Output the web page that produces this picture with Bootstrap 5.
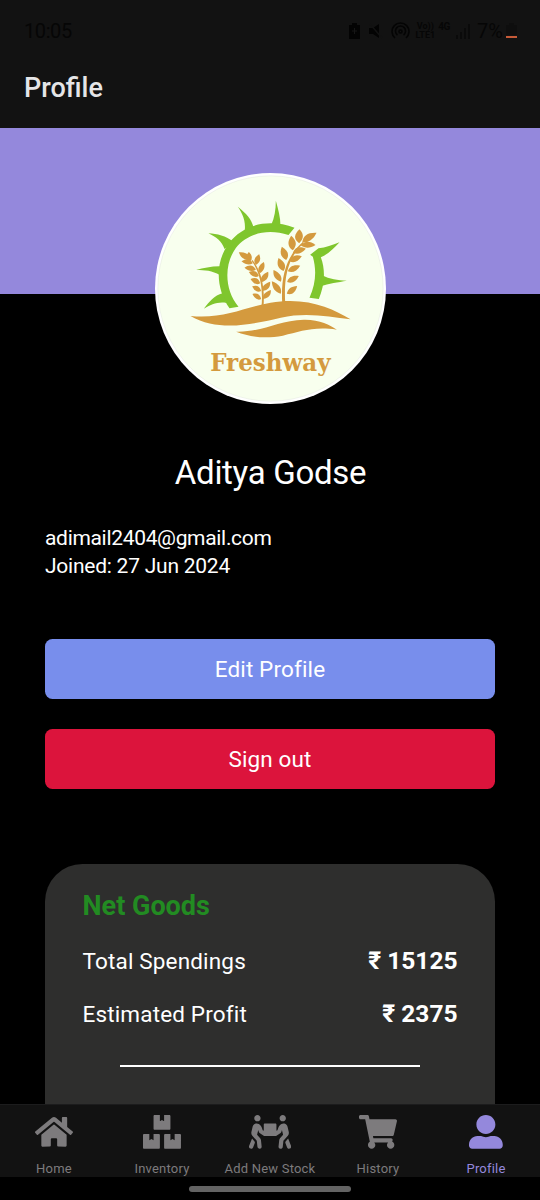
<!DOCTYPE html>
<html lang="en">
<head>
<meta charset="utf-8">
<meta name="viewport" content="width=device-width, initial-scale=1">
<title>Profile</title>
<link href="https://cdn.jsdelivr.net/npm/bootstrap@5.3.0/dist/css/bootstrap.min.css" rel="stylesheet">
<style>
body{background:#000;color:#fff;font-family:Roboto,"Liberation Sans",sans-serif;height:1200px;overflow:hidden}
.bar-bg{background:#121212}
.status{height:62px;color:#060606;font-size:20px;padding:0 23px 0 24px}
.clock{letter-spacing:-.4px}
.tiny-net{font-size:9px;line-height:9px;font-weight:700}
.net-type{font-size:10px;margin:0 0 10px 3px;letter-spacing:-.3px}
.title-row{height:66px;padding:0 24px 15px}
.title-row h1{font-size:27px;font-weight:500;color:#e5e5e7;line-height:32px}
.banner{height:166px;background:#9488dc}
.avatar{width:231px;height:231px;margin-top:-121px}
.person{font-size:33px;line-height:40px;margin-top:49px;font-weight:400;letter-spacing:-.3px;padding-left:1px}
.page-pad{padding:0 45px}
.details{font-size:21px;line-height:28px;margin-top:31px;letter-spacing:-.24px}
.details .mail{letter-spacing:-.32px}
.action{height:60px;font-size:22.5px;border:0;border-radius:7.5px;color:#fff;padding:2px 0 0}
.edit{background:#788eec;margin-top:58.5px;letter-spacing:.15px}
.signout{background:#dc143c;margin-top:30px;letter-spacing:.1px}
.goods{background:#2e2e2d;border-radius:37.5px 37.5px 0 0;margin-top:75px;padding:26px 37.5px 0;height:241.5px}
.goods h2{font-size:27px;line-height:32px;font-weight:700;color:#228b22}
.line-item{font-size:22.5px;line-height:28px;letter-spacing:.16px;margin-top:25px}
.line-item strong{font-size:24.5px;font-weight:700;letter-spacing:0}
.rule{height:1.5px;background:#fff;margin:37.5px 37.5px 0}
.tabs{height:73px;border-top:1px solid #1c1c1d}
.tab{font-size:13px;line-height:16px;color:#7d7b7d;letter-spacing:.2px;width:20%;padding-top:10px}
.tab svg{height:33.75px;display:block;margin-bottom:12.25px}
.tab.current{color:#9488dc}
.home-area{height:23px}
.handle{width:162px;height:6px;background:#636363}
</style>
</head>
<body class="d-flex flex-column">
<header class="bar-bg flex-shrink-0">
  <div class="status d-flex align-items-center justify-content-between">
    <span class="clock">10:05</span>
    <div class="d-flex align-items-center">
      <svg width="13" height="16" viewBox="0 0 13 16"><path fill="#030303" d="M4 0h5v2h3v14H1V2h3z"/><path d="M6.500 5v6M4 8h5" stroke="#161616"/></svg>
      <svg class="ms-2" width="14" height="16" viewBox="0 0 14 16"><path fill="#030303" d="M0 5h4l6-4v14l-6-4H0z"/><path d="M1 1l12 14" stroke="#121212" stroke-width="1.500"/></svg>
      <svg class="ms-2" width="19" height="18" viewBox="0 0 19 18" fill="none" stroke="#040404" stroke-width="1.600"><path d="M4 16a8.500 8.500 0 1 1 11 0M6.500 13a5 5 0 1 1 6 0"/><circle cx="9.500" cy="9.500" r="1.500"/></svg>
      <span class="tiny-net text-center" style="margin-left:5px">Vo))<br>LTE1</span>
      <span class="tiny-net net-type">4G</span>
      <svg style="margin-left:6px" width="15" height="15" viewBox="0 0 15 15"><path d="M1 15v-4M5 15V8M9 15V4M13 15V0" stroke="#080808" stroke-width="1.500"/></svg>
      <span style="margin-left:6px">7%</span>
      <svg style="margin:0 0 0 3px" width="11" height="16" viewBox="0 0 11 16"><path fill="#0e0e0e" d="M3 0h5v2h3v10H0V2h3z"/><path fill="#c65a38" d="M0 13h11v2H0z"/></svg>
    </div>
  </div>
  <div class="title-row d-flex align-items-center"><h1 class="m-0">Profile</h1></div>
</header>

<main class="flex-grow-1 overflow-hidden">
  <div class="banner"></div>
  <svg class="avatar d-block mx-auto position-relative" viewBox="13.5 24 693 693">
    <circle cx="360" cy="370.500" r="346.500" fill="#fff"/>
    <circle cx="360" cy="370.500" r="338" fill="#f8ffee" stroke="#d9dfd5" stroke-width="1"/>
    <!-- sun ring and rays -->
    <g fill="#7fc62d">
      <path d="M237 430C197 374 192 294 234 236C281 174 360 162 432 188L414 210C354 191 292 203 256 249C219 300 223 377 264 425Z"/>
      <path d="M283 196C286 168 276 145 262 125C287 145 304 163 309 187Z"/>
      <path d="M362 180C372 158 376 134 376 107C383 132 390 157 390 182Z"/>
      <path d="M222 252C214 229 197 216 174 205C200 207 226 212 249 231Z"/>
      <path d="M208 330C185 317 164 315 137 315C160 309 185 303 213 304Z"/>
      <path d="M160 431C175 412 192 391 216 385L228 414C203 409 181 419 160 431Z"/>
      <path d="M479 269L504 250C526 248 545 241 567 232C551 249 536 266 511 277C526 316 522 362 505 402L477 398C497 354 498 313 487 275Z"/>
      <path d="M514 330C538 343 561 346 589 347C562 352 537 354 508 365Z"/>
    </g>
    <g fill="#d49a3e">
      <path d="M120 453C216 463 280 428 360 413C466 394 545 429 600 463C535 455 468 441 391 458C312 476 207 503 120 453Z"/>
      <path d="M257 500C336 502 382 466 460 464C507 463 538 480 559 494C486 484 451 500 397 512C344 522 299 516 257 500Z"/>
      <!-- left ear -->
      <path d="M333 426C338 373 330 323 303 287L306 285C336 322 343 373 339 426Z"/>
      <path d="M0 0C-7-18-19-25-38-23C-32-6-20 2 0 0Z" transform="translate(303 285)"/>
      <path d="M0 0C8-10 6-20-4-29C-14-18-12-8 0 0Z" transform="translate(299 290)"/>
      <path d="M0 0C14-8 16-19 10-32C-4-23-9-13 0 0Z" transform="translate(316 300)"/>
      <path d="M0 0C13-8 17-20 12-34C-4-24-9-12 0 0Z" transform="translate(328 325)"/>
      <path d="M0 0C17-6 23-17 20-32C2-25-5-14 0 0Z" transform="translate(333 352)"/>
      <path d="M0 0C18-3 24-13 23-28C5-22-3-13 0 0Z" transform="translate(336 378)"/>
      <path d="M0 0C18-3 24-13 23-27C5-21-3-12 0 0Z" transform="translate(338 402)"/>
      <path d="M0 0C-8-15-20-16-34-6C-21 5-10 6 0 0Z" transform="translate(307 295)"/>
      <path d="M0 0C-8-15-20-16-34-6C-21 5-10 6 0 0Z" transform="translate(316 314)"/>
      <path d="M0 0C-5-15-15-19-30-12C-21 2-10 6 0 0Z" transform="translate(325 333)"/>
      <path d="M0 0C-4-15-14-19-29-13C-21 1-10 6 0 0Z" transform="translate(329 355)"/>
      <path d="M0 0C-4-15-14-19-27-14C-20 1-10 6 0 0Z" transform="translate(332 378)"/>
      <path d="M0 0C-4-15-13-19-26-15C-19 0-9 5 0 0Z" transform="translate(332 402)"/>
      <!-- right ear -->
      <path d="M395 411C391 333 407 275 456 232L459 235C412 279 400 335 404 411Z"/>
      <path d="M0 0C3-22 16-31 43-30C34-10 19 0 0 0Z" transform="translate(455 233)"/>
      <path d="M0 0C-18-13-15-27 1-42C16-26 13-13 0 0Z" transform="translate(446 235)"/>
      <path d="M0 0C14-14 28-14 45-1C28 10 13 9 0 0Z" transform="translate(450 241)"/>
      <path d="M0 0C-16-11-17-26-5-44C12-29 13-16 0 0Z" transform="translate(427 256)"/>
      <path d="M0 0C-17-9-20-22-13-40C6-28 11-15 0 0Z" transform="translate(407 285)"/>
      <path d="M0 0C-18-8-21-21-15-39C4-28 10-14 0 0Z" transform="translate(399 318)"/>
      <path d="M0 0C-18-6-24-18-22-35C-3-27 6-14 0 0Z" transform="translate(391 350)"/>
      <path d="M0 0C-18-4-26-17-27-37C-5-29 4-15 0 0Z" transform="translate(391 386)"/>
      <path d="M0 0C7-17 20-20 39-12C26 3 13 7 0 0Z" transform="translate(427 263)"/>
      <path d="M0 0C6-17 19-22 37-15C26 1 13 7 0 0Z" transform="translate(417 289)"/>
      <path d="M0 0C5-15 17-21 37-17C27 0 14 6 0 0Z" transform="translate(412 319)"/>
      <path d="M0 0C4-15 16-21 35-18C26 0 14 6 0 0Z" transform="translate(410 351)"/>
      <path d="M0 0C3-15 13-22 31-23C26-3 15 5 0 0Z" transform="translate(409 386)"/>
    </g>
    <text x="179" y="617" textLength="361" lengthAdjust="spacingAndGlyphs" font-family="'DejaVu Serif','Liberation Serif',serif" font-size="72" font-weight="700" fill="#d49a3e">Freshway</text>
  </svg>
  <h2 class="person text-center mb-0">Aditya Godse</h2>
  <div class="page-pad">
    <div class="details"><div class="mail">adimail2404@gmail.com</div><div>Joined: 27 Jun 2024</div></div>
    <button class="btn action edit w-100 d-block">Edit Profile</button>
    <button class="btn action signout w-100 d-block">Sign out</button>
    <section class="goods">
      <h2 class="m-0">Net Goods</h2>
      <div class="line-item d-flex justify-content-between"><span>Total Spendings</span><strong>₹ 15125</strong></div>
      <div class="line-item d-flex justify-content-between"><span>Estimated Profit</span><strong>₹ 2375</strong></div>
      <div class="rule"></div>
    </section>
  </div>
</main>

<nav class="tabs bar-bg d-flex flex-shrink-0">
  <div class="tab d-flex flex-column align-items-center">
    <svg viewBox="0 0 576 512" fill="currentColor"><path d="M280.370 148.260L96 300.110V464a16 16 0 0 0 16 16l112.060-.29a16 16 0 0 0 15.920-16V368a16 16 0 0 1 16-16h64a16 16 0 0 1 16 16v95.640a16 16 0 0 0 16 16.050L464 480a16 16 0 0 0 16-16V300L295.670 148.260a12.190 12.190 0 0 0-15.300 0zM571.600 251.470L488 182.560V44.050a12 12 0 0 0-12-12h-56a12 12 0 0 0-12 12v72.610L318.470 43a48 48 0 0 0-61 0L4.340 251.470a12 12 0 0 0-1.600 16.900l25.500 31A12 12 0 0 0 45.150 301l235.220-193.740a12.190 12.190 0 0 1 15.300 0L530.900 301a12 12 0 0 0 16.900-1.600l25.500-31a12 12 0 0 0-1.700-16.930z"/></svg>
    <span>Home</span>
  </div>
  <div class="tab d-flex flex-column align-items-center">
    <svg viewBox="0 0 576 512" fill="currentColor"><path d="M560 288h-80v96l-32-21.300-32 21.300v-96h-80c-8.800 0-16 7.200-16 16v192c0 8.800 7.200 16 16 16h224c8.800 0 16-7.200 16-16V304c0-8.800-7.200-16-16-16zm-384-64h224c8.800 0 16-7.200 16-16V16c0-8.800-7.200-16-16-16h-80v96l-32-21.300L256 96V0h-80c-8.800 0-16 7.200-16 16v192c0 8.800 7.200 16 16 16zm64 64h-80v96l-32-21.300L96 384v-96H16c-8.800 0-16 7.200-16 16v192c0 8.800 7.200 16 16 16h224c8.800 0 16-7.200 16-16V304c0-8.800-7.200-16-16-16z"/></svg>
    <span>Inventory</span>
  </div>
  <div class="tab d-flex flex-column align-items-center">
    <svg viewBox="0 0 640 512" fill="currentColor"><path d="M128 96c26.500 0 48-21.500 48-48S154.500 0 128 0 80 21.500 80 48s21.500 48 48 48zm384 0c26.500 0 48-21.500 48-48S538.500 0 512 0s-48 21.500-48 48 21.500 48 48 48zm125.700 372.100l-44-110-41.100 46.400-2 18.200 27.700 69.200c5 12.500 17 20.100 29.700 20.100 4 0 8-.7 11.900-2.300 16.400-6.600 24.400-25.200 17.800-41.600zm-34.200-209.800L585 178.100c-4.600-20-18.600-36.800-37.500-44.900-18.500-8-39-6.700-56.100 3.300-22.700 13.400-39.700 34.500-48.100 59.400L432 229.800 416 240v-96c0-8.800-7.200-16-16-16H240c-8.800 0-16 7.200-16 16v96l-16.100-10.200-11.300-33.900c-8.300-25-25.400-46-48.100-59.400-17.200-10-37.600-11.300-56.100-3.300-18.900 8.100-32.900 24.900-37.500 44.900l-18.400 80.200c-4.600 20 .7 41.200 14.400 56.700l67.200 75.900 10.100 92.600C130 499.800 143.800 512 160 512c1.200 0 2.300-.1 3.500-.2 17.600-1.900 30.200-17.700 28.300-35.300l-10.100-92.800c-1.500-13-6.900-25.100-15.600-35l-43.300-49 17.600-70.300 6.800 20.400c4.100 12.500 11.900 23.400 24.500 32.600l51.100 32.500c4.600 2.900 12.100 4.600 17.200 5h160c5.100-.4 12.600-2.100 17.200-5l51.100-32.500c12.600-9.200 20.400-20 24.500-32.600l6.800-20.400 17.600 70.300-43.300 49c-8.700 9.900-14.100 22-15.600 35l-10.100 92.800c-1.900 17.600 10.800 33.400 28.300 35.300 1.200.1 2.300.2 3.500.2 16.100 0 30-12.100 31.800-28.300l10.100-92.600 67.200-75.900c13.600-15.500 19-36.700 14.400-56.700zM46.300 358.100l-44 110c-6.600 16.400 1.400 35 17.800 41.600 16.800 6.600 35.100-1.700 41.600-17.800l27.700-69.200-2-18.200-41.100-46.400z"/></svg>
    <span class="text-nowrap">Add New Stock</span>
  </div>
  <div class="tab d-flex flex-column align-items-center">
    <svg viewBox="0 0 576 512" fill="currentColor"><path d="M528.120 301.319l47.273-208C578.806 78.301 567.391 64 551.990 64H159.208l-9.166-44.810C147.758 8.021 137.930 0 126.529 0H24C10.745 0 0 10.745 0 24v16c0 13.255 10.745 24 24 24h69.883l70.248 343.435C147.325 417.100 136 435.222 136 456c0 30.928 25.072 56 56 56s56-25.072 56-56c0-15.674-6.447-29.835-16.824-40h209.647C430.447 426.165 424 440.326 424 456c0 30.928 25.072 56 56 56s56-25.072 56-56c0-22.172-12.888-41.332-31.579-50.405l5.517-24.276c3.413-15.018-8.002-29.319-23.403-29.319H218.117l-6.545-32h293.145c11.206 0 20.920-7.754 23.403-18.681z"/></svg>
    <span>History</span>
  </div>
  <div class="tab current d-flex flex-column align-items-center">
    <svg viewBox="0 0 512 512" fill="currentColor"><path d="M256 288c79.500 0 144-64.500 144-144S335.500 0 256 0 112 64.500 112 144s64.500 144 144 144zm128 32h-55.100c-22.200 10.200-46.900 16-72.900 16s-50.600-5.800-72.900-16H128C57.300 320 0 377.300 0 448v16c0 26.500 21.500 48 48 48h416c26.500 0 48-21.500 48-48v-16c0-70.700-57.300-128-128-128z"/></svg>
    <span>Profile</span>
  </div>
</nav>
<div class="home-area flex-shrink-0 d-flex justify-content-center align-items-center"><div class="handle rounded-pill"></div></div>
<script src="https://cdn.jsdelivr.net/npm/bootstrap@5.3.0/dist/js/bootstrap.bundle.min.js"></script>
</body>
</html>
